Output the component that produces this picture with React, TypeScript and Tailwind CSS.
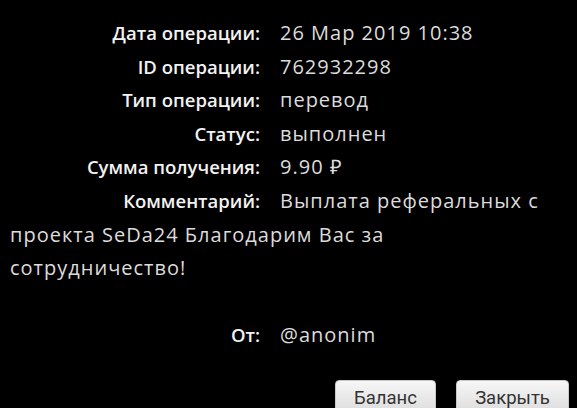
const rows: [string, string][] = [
  ['Дата операции:', '26 Мар 2019 10:38'],
  ['ID операции:', '762932298'],
  ['Тип операции:', 'перевод'],
  ['Статус:', 'выполнен'],
  ['Сумма получения:', '9.90 ₽'],
  ['Комментарий:', 'Выплата реферальных с'],
];

function Label({ text }: { text: string }) {
  return (
    <span className="inline-block w-[250px] text-right text-[18.5px] tracking-normal font-semibold text-[#f2f2f2] mr-[20px]">
      {text}
    </span>
  );
}

export default function App() {
  return (
    <div className="w-[577px] h-[408px] overflow-hidden bg-black font-['Open_Sans',sans-serif]">
      <div className="pl-[10px] pr-[10px] pt-[16px] text-[20px] tracking-[1px] leading-[33.6px] text-[#dcdcdc]">
        {rows.map(([label, value]) => (
          <div key={label}>
            <Label text={label} />
            <span>{value}</span>
          </div>
        ))}
        {/* comment keeps flowing from the left edge */}
        <div>проекта SeDa24 Благодарим Вас за</div>
        <div>сотрудничество!</div>
        <div>&nbsp;</div>
        <div>
          <Label text="От:" />
          <span>@anonim</span>
        </div>
      </div>
      <div className="flex justify-end gap-[20px] pr-[8px] mt-[28px]">
        <button className="w-[101px] h-[36px] rounded-[4px] border border-[#c8c8c8] bg-gradient-to-b from-[#f7f7f7] to-[#dadada] text-[18.5px] text-[#333] font-['Roboto',sans-serif] pt-[1px]">
          Баланс
        </button>
        <button className="w-[113px] h-[36px] rounded-[4px] border border-[#c8c8c8] bg-gradient-to-b from-[#f7f7f7] to-[#dadada] text-[18.5px] text-[#333] font-['Roboto',sans-serif] pt-[1px]">
          Закрыть
        </button>
      </div>
    </div>
  );
}
